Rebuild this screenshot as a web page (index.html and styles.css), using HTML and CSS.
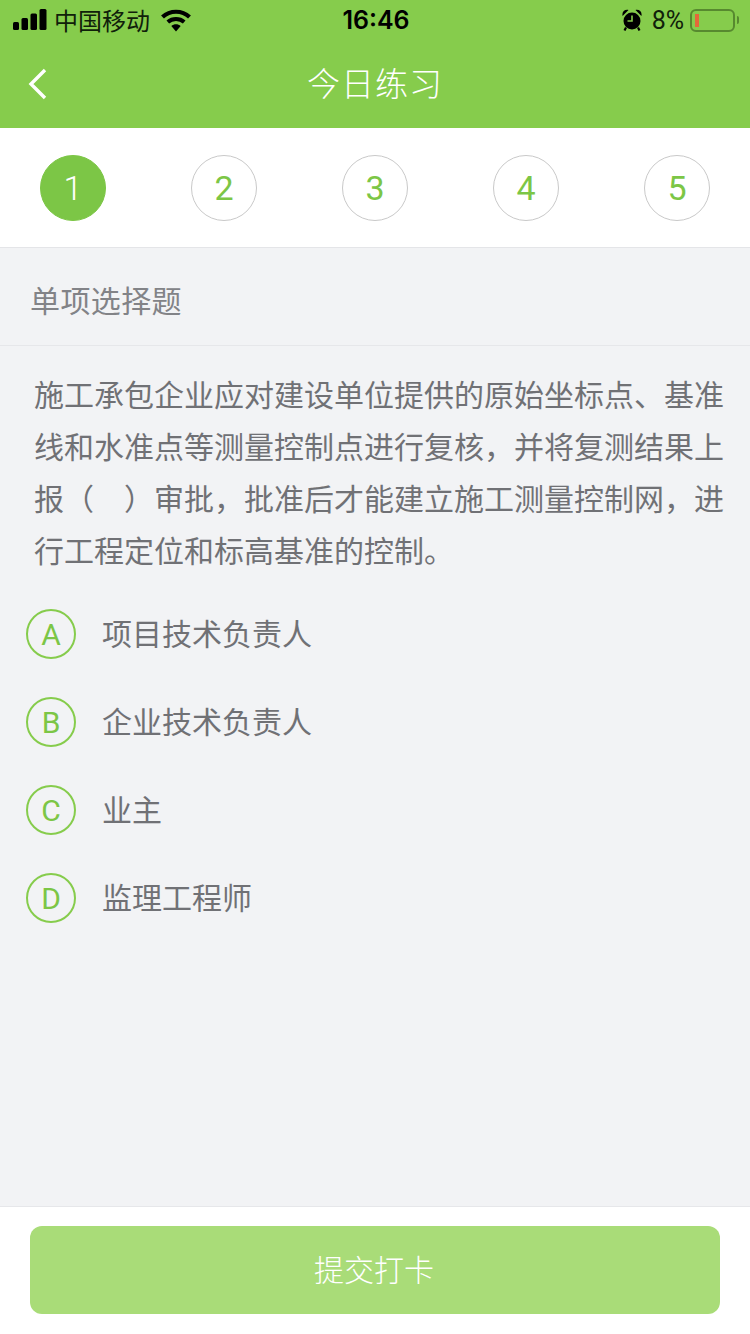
FILE: index.html
```html
<!DOCTYPE html>
<html lang="zh-CN">
<head>
<meta charset="utf-8">
<title>今日练习</title>
<link rel="stylesheet" href="styles.css">
</head>
<body>
<div class="page">
  <header class="head">
    <div class="status">
      <div class="status-left">
        <svg class="signal" width="34" height="21" viewBox="0 0 34 21"><rect x="0" y="13" width="6" height="8" rx="1.5"/><rect x="8.500" y="9" width="6.500" height="12" rx="1.5"/><rect x="17.500" y="4.500" width="6.500" height="16.500" rx="1.5"/><rect x="26.500" y="0" width="7" height="21" rx="1.5"/></svg>
        <span class="carrier">中国移动</span>
        <svg class="wifi" width="30" height="23" viewBox="0 0 30 23"><path d="M1.500 8C9 1 21 1 28.500 8" fill="none" stroke="#000" stroke-width="4.200"/><path d="M6.800 13c4.600-4 11.800-4 16.400 0" fill="none" stroke="#000" stroke-width="4"/><path d="M10.300 17 15 22.500 19.700 17c-2.700-2.300-6.700-2.300-9.400 0z"/></svg>
      </div>
      <div class="time">16:46</div>
      <div class="status-right">
        <svg class="alarm" width="20" height="22" viewBox="0 0 20 22"><circle cx="10" cy="12" r="8.500"/><path d="M.6 7C-.4 3 2.500.2 6.500 1zM19.400 7C20.400 3 17.500.2 13.500 1z"/><path d="M4 18.500 2.500 21.500M16 18.500 17.500 21.500" stroke="#000" stroke-width="2.200"/><path d="M10 6.500V12H5.500" fill="none" stroke="#86cc4c" stroke-width="1.600"/></svg>
        <span class="pct">8%</span>
        <div class="battery"><span class="level"></span></div>
        <span class="nub"></span>
      </div>
    </div>
    <div class="nav">
      <svg class="back" width="20" height="32" viewBox="0 0 20 32"><path d="M18 2 4 16l14 14" fill="none" stroke="#fff" stroke-width="3.400"/></svg>
      <h1 class="title">今日练习</h1>
    </div>
  </header>

  <nav class="steps">
    <span class="step step-on">1</span>
    <span class="step">2</span>
    <span class="step">3</span>
    <span class="step">4</span>
    <span class="step">5</span>
  </nav>

  <main class="body">
    <div class="kind">单项选择题</div>
    <p class="question">施工承包企业应对建设单位提供的原始坐标点、基准线和水准点等测量控制点进行复核，并将复测结果上报（　）审批，批准后才能建立施工测量控制网，进行工程定位和标高基准的控制。</p>
    <ul class="options">
      <li class="option"><span class="letter">A</span><span class="opt-text">项目技术负责人</span></li>
      <li class="option"><span class="letter">B</span><span class="opt-text">企业技术负责人</span></li>
      <li class="option"><span class="letter">C</span><span class="opt-text">业主</span></li>
      <li class="option"><span class="letter">D</span><span class="opt-text">监理工程师</span></li>
    </ul>
  </main>

  <footer class="foot">
    <button class="submit" type="button">提交打卡</button>
  </footer>
</div>
</body>
</html>
```
FILE: styles.css
```css
* { box-sizing: border-box; }
html, body { margin: 0; padding: 0; }
body {
  font-family: "Noto Sans CJK SC", "Liberation Sans", sans-serif;
  background: #f2f3f5;
}
.page {
  width: 750px;
  height: 1334px;
  display: flex;
  flex-direction: column;
  overflow: hidden;
}
.head { height: 128px; background: #86cc4c; flex: none; }
.status {
  height: 40px;
  padding: 0 11px 0 13px;
  display: grid;
  grid-template-columns: 1fr auto 1fr;
  align-items: center;
  color: #000;
}
.status-left, .status-right { display: flex; align-items: center; }
.status-right { justify-content: flex-end; }
.signal { margin-top: -1px; }
.carrier { font-size: 24px; line-height: 30px; margin-left: 7px; font-weight: 400; color: #10200a; }
.wifi { margin-left: 11px; }
.time { font-family: Inter, "Liberation Sans", sans-serif; font-size: 25px; font-weight: 600; }
.alarm { margin-right: 10px; }
.pct { font-family: Roboto, "Liberation Sans", sans-serif; font-size: 25px; color: #10200a; }
.battery {
  width: 45px;
  height: 23px;
  margin-left: 6px;
  border: 2px solid #57892f;
  border-radius: 6px;
  padding: 3px;
}
.level { display: block; width: 4px; height: 100%; background: #e4683a; }
.nub { width: 2px; height: 8px; margin-left: 2px; background: #57892f; border-radius: 0 2px 2px 0; }
.nav {
  height: 88px;
  position: relative;
  display: flex;
  align-items: center;
  justify-content: center;
  padding-bottom: 4px;
}
.back { position: absolute; left: 27px; top: 28px; }
.title { margin: 0; font-size: 33px; font-weight: 300; color: #fff; line-height: 44px; letter-spacing: 1px; }

.steps {
  flex: none;
  height: 120px;
  padding: 27px 40px 0;
  background: #fff;
  border-bottom: 1px solid #e4e5e8;
  display: flex;
  justify-content: space-between;
  align-items: flex-start;
}
.step {
  width: 66px;
  height: 66px;
  border-radius: 50%;
  border: 1px solid #c9c9c9;
  color: #7cc646;
  font-family: Roboto, "Liberation Sans", sans-serif;
  font-weight: 400;
  font-size: 34px;
  display: flex;
  align-items: center;
  justify-content: center;
}
.step-on { background: #7cc646; border-color: #7cc646; color: #fff; font-weight: 300; }

.body { flex: 1; min-height: 0; }
.kind {
  height: 98px;
  padding: 4px 30px 0;
  display: flex;
  align-items: center;
  font-size: 30px;
  font-weight: 400;
  letter-spacing: .4px;
  color: #828387;
  border-bottom: 1px solid #e6e7ea;
}
.question {
  margin: 0;
  padding: 21px 26px 0 34px;
  font-size: 30px;
  line-height: 52px;
  font-weight: 400;
  color: #707175;
  text-align: justify;
}
.options { list-style: none; margin: 15px 0 0; padding: 0 0 0 26px; }
.option { height: 88px; display: flex; align-items: center; }
.letter {
  width: 50px;
  height: 50px;
  flex: none;
  border-radius: 50%;
  border: 2px solid #86cc4c;
  color: #7cc646;
  font-family: Roboto, "Liberation Sans", sans-serif;
  font-weight: 400;
  font-size: 30px;
  display: flex;
  align-items: center;
  justify-content: center;
}
.opt-text { margin-left: 26px; font-size: 30px; font-weight: 400; color: #707175; position: relative; top: -2px; }

.foot {
  flex: none;
  height: 128px;
  padding: 19px 30px 0;
  background: #fff;
  border-top: 1px solid #e6e7ea;
}
.submit {
  display: block;
  width: 100%;
  height: 88px;
  border: 0;
  border-radius: 12px;
  background: #a9dc78;
  color: #fff;
  font: 300 30px "Noto Sans CJK SC", sans-serif;
  padding: 0 2px 4px 0;
}
```
